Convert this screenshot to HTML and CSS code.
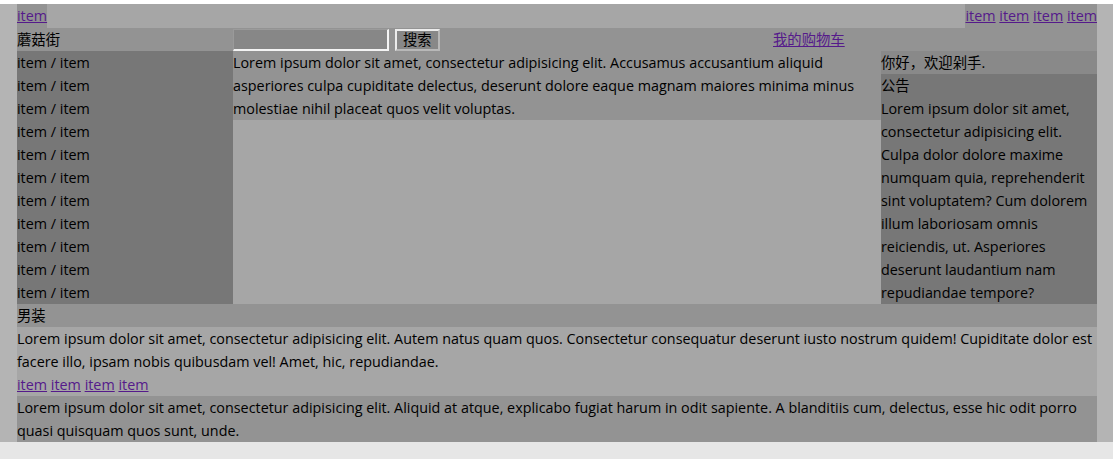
FILE: index.html
```html
<!DOCTYPE html>
<html lang="zh">
<head>
	<meta charset="UTF-8">
	<meta name="viewport" content="width=device-width, initial-scale=1.0">
	<title>蘑菇街</title>
	<link rel="stylesheet" href="styles.css">
</head>
<body>
	<div class="page">
		<div class="topbar">
			<div class="topLeft"><a href="#">item</a></div>
			<div class="topRight"><a href="#">item</a> <a href="#">item</a> <a href="#">item</a> <a href="#">item</a></div>
		</div>
		<!-- topbar -->

		<div class="header">
			<div class="logo">蘑菇街</div>
			<div class="search"><input type="text" class="searchInput"><button type="button" class="searchBtn">搜索</button></div>
			<div class="cart"><a href="#">我的购物车</a></div>
		</div>
		<!-- header -->

		<div class="main">
			<ul class="nav">
				<li>item / item</li>
				<li>item / item</li>
				<li>item / item</li>
				<li>item / item</li>
				<li>item / item</li>
				<li>item / item</li>
				<li>item / item</li>
				<li>item / item</li>
				<li>item / item</li>
				<li>item / item</li>
				<li>item / item</li>
			</ul>
			<div class="banner">
				<p class="bannerText">Lorem ipsum dolor sit amet, consectetur adipisicing elit. Accusamus accusantium aliquid asperiores culpa cupiditate delectus, deserunt dolore eaque magnam maiores minima minus molestiae nihil placeat quos velit voluptas.</p>
			</div>
			<div class="side">
				<div class="welcome">你好，欢迎剁手.</div>
				<div class="notice">
					<h4>公告</h4>
					<p>Lorem ipsum dolor sit amet, consectetur adipisicing elit. Culpa dolor dolore maxime numquam quia, reprehenderit sint voluptatem? Cum dolorem illum laboriosam omnis reiciendis, ut. Asperiores deserunt laudantium nam repudiandae tempore?</p>
				</div>
			</div>
		</div>
		<!-- main -->

		<div class="floor">
			<h3 class="floorTitle">男装</h3>
			<div class="floorBody">
				<p>Lorem ipsum dolor sit amet, consectetur adipisicing elit. Autem natus quam quos. Consectetur consequatur deserunt iusto nostrum quidem! Cupiditate dolor est facere illo, ipsam nobis quibusdam vel! Amet, hic, repudiandae.</p>
				<div class="floorLinks"><a href="#">item</a> <a href="#">item</a> <a href="#">item</a> <a href="#">item</a></div>
			</div>
		</div>
		<!-- floor -->

		<div class="footer">
			<p>Lorem ipsum dolor sit amet, consectetur adipisicing elit. Aliquid at atque, explicabo fugiat harum in odit sapiente. A blanditiis cum, delectus, esse hic odit porro quasi quisquam quos sunt, unde.</p>
		</div>
	</div>
</body>
</html>
```

FILE: styles.css
```css
html {background-color:#e6e6e6;}
body {margin:0; font-family:"Open Sans", "Noto Sans CJK SC", sans-serif; font-size:14.35px; line-height:23px; color:#000;}
ul, p, h3, h4 {list-style:none; padding:0; margin:0;}
h3, h4 {font-size:inherit; font-weight:normal;}
a {color:#551a8b;}
.page {border-top:4px solid #fff; background-color:#b4b4b4; padding:0 16px 0 17px;}
.topbar {display:flex; justify-content:space-between; background-color:#a6a6a6; height:24px;}
.topLeft, .topRight {background-color:#939393;}
.header {display:flex; background-color:#939393; height:23px;}
.logo {width:20%;}
.search {width:50%; display:flex; align-items:center; gap:6px;}
.cart {width:30%;}
.searchInput {box-sizing:border-box; width:156px; height:22px; margin:0; padding:0 2px; background-color:#878787; border:2px solid #f4f4f4; border-top:1px solid #9a9a9a; border-left:1px solid #9a9a9a; font:inherit;}
.searchBtn {box-sizing:border-box; height:22px; margin:0; padding:0 6px; background-color:#888; border:2px solid #b8b8b8; border-top-color:#ececec; border-left-color:#ececec; font:inherit; line-height:16px; color:#000;}
.main {display:grid; grid-template-columns:1fr 3fr 1fr; background-color:#a6a6a6;}
.nav {background-color:#777;}
.banner {align-self:start;}
.bannerText {background-color:#939393;}
.welcome {background-color:#898989;}
.notice {background-color:#777;}
.floorTitle {background-color:#939393;}
.floorBody {background-color:#a6a6a6;}
.footer {background-color:#939393;}
```
